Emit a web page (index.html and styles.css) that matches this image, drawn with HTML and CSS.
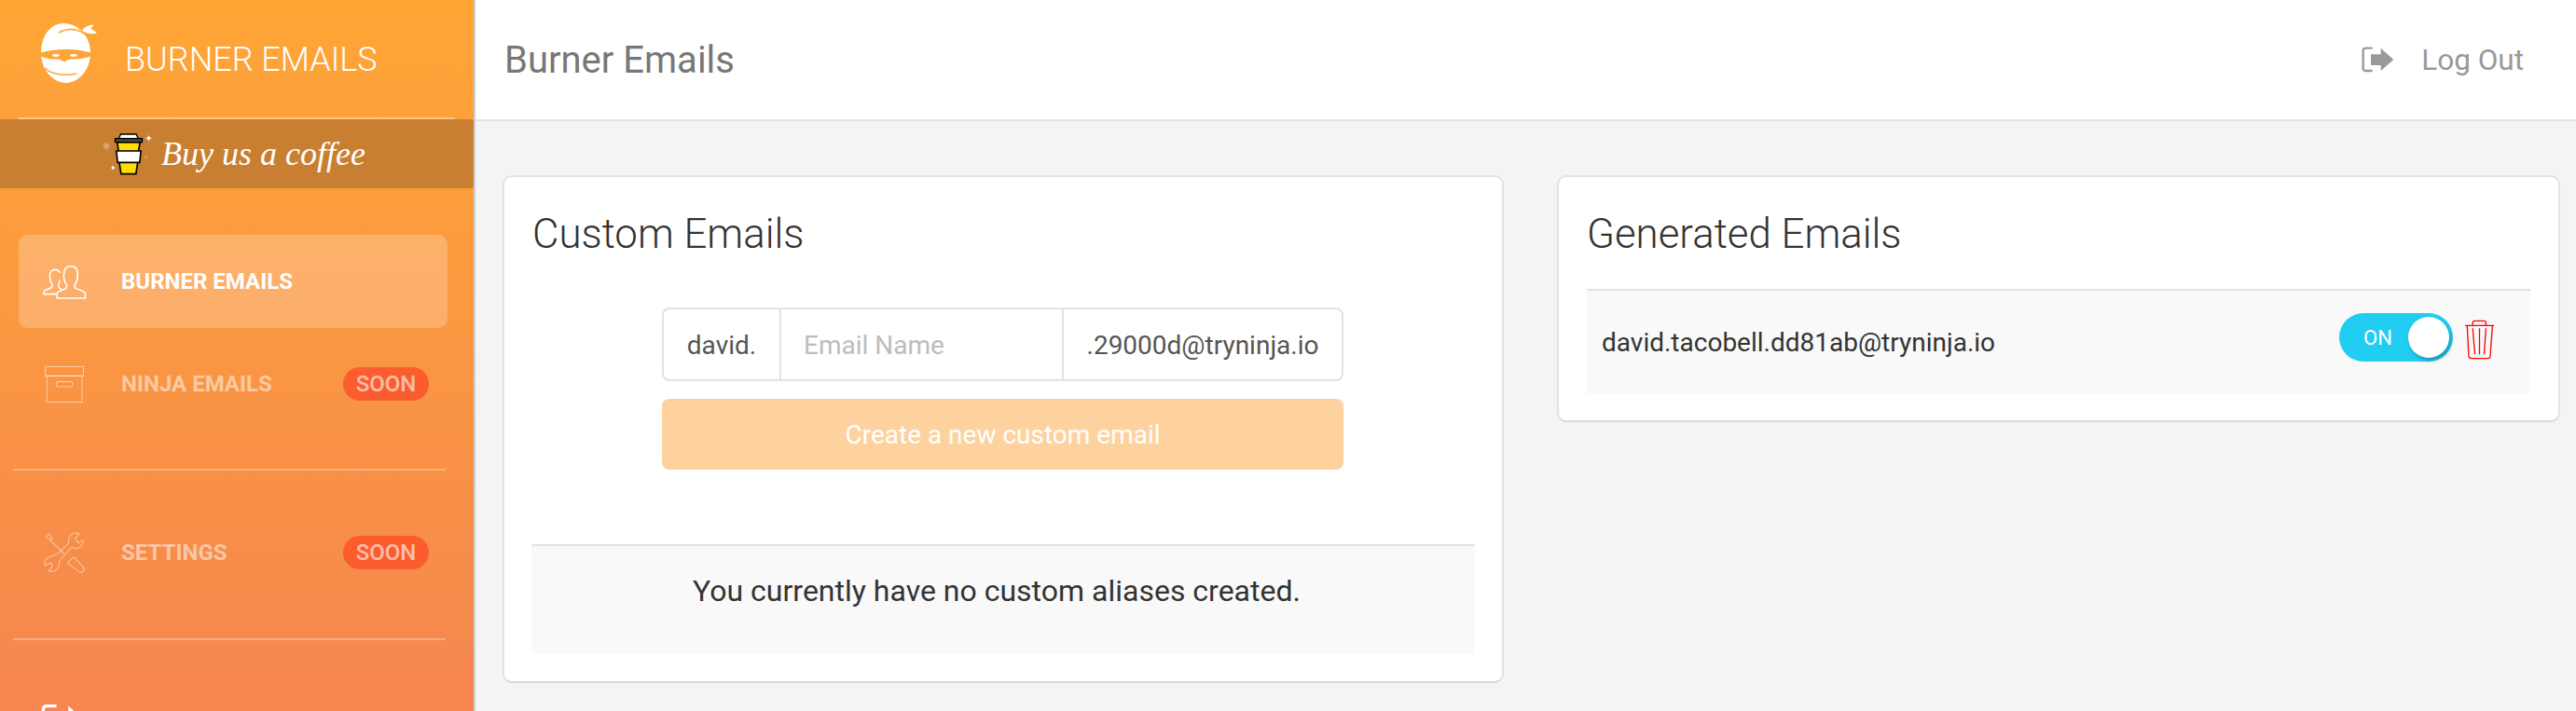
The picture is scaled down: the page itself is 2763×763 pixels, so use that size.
FILE: index.html
```html
<!DOCTYPE html>
<html lang="en">
<head>
<meta charset="utf-8">
<title>Burner Emails</title>
<link rel="stylesheet" href="styles.css">
</head>
<body>
<div class="app">
  <aside class="sidebar">
    <div class="brand">
      <svg class="logo" viewBox="44 22 62 68" aria-hidden="true">
        <path fill="#fff" d="M68 24C84 24 97 38 97 56C97 74 84 88 71 88C57 88 44 74 44 56C44 38 54 24 68 24Z"/>
        <path fill="#fff" d="M88 32C91 27 97 25 101 26L97 29.500C100 31 102 33 104 34.500C99 36 92 35 88 32Z"/>
        <path fill="none" stroke="#ffa537" stroke-width="1.600" d="M63 34C72 29 84 29 93 37"/>
        <path fill="#ffa537" d="M44 55.500C53 52.500 62 52 70 52C80 52 90 53 97 55.500L97 59.500C90 62 84 62.500 77 62.500C73 62.500 71 64 69 65.500C67 64 65 62.500 61 62.500C55 62.500 49 62 44 59.500Z"/>
        <ellipse fill="#fff" cx="60" cy="58.500" rx="3.800" ry="1.400"/>
        <ellipse fill="#fff" cx="79" cy="58.500" rx="3.800" ry="1.400"/>
        <path fill="none" stroke="#ffa537" stroke-width="1.500" d="M48 72C56 79 70 81 82 78"/>
      </svg>
      <span class="brand-name">BURNER EMAILS</span>
    </div>
    <div class="rule rule-top"></div>
    <a class="coffee">
      <svg class="cup" viewBox="50 40 170 150" aria-hidden="true">
        <circle cx="68" cy="90" r="11" fill="#fff" opacity=".22"/>
        <circle cx="68" cy="90" r="4" fill="#fff" opacity=".25"/>
        <circle cx="195" cy="127" r="5" fill="#fff" opacity=".25"/>
        <circle cx="89" cy="160" r="5" fill="#fff"/>
        <path fill="#fff" d="M204 55L207 62L214 65L207 68L204 75L201 68L194 65L201 62Z"/>
        <path fill="#fff" stroke="#000" stroke-width="4" d="M108 66L114 52H164L170 66Z"/>
        <path fill="#ffdd00" stroke="#000" stroke-width="5" d="M103 78H176L171 108H107Z"/>
        <path fill="#ffdd00" stroke="#000" stroke-width="5" d="M109 140H169L163 180H115Z"/>
        <path fill="#fff" stroke="#000" stroke-width="5" d="M100 106H179L175 143H104Z"/>
        <path fill="#444" stroke="#000" stroke-width="4" d="M96 66H183V78H96Z"/>
      </svg>
      <span class="coffee-text">Buy us a coffee</span>
    </a>
    <nav class="nav">
      <a class="nav-item is-active">
        <svg class="nav-icon" viewBox="70 60 160 125" aria-hidden="true">
          <path d="M125 180V165Q125 158 135 155L155 147Q160 143 158 135Q148 120 148 100Q148 70 172 70Q196 70 196 100Q196 120 186 135Q184 143 190 147L212 155Q222 158 222 165V180Z"/>
          <path d="M122 166H80V158Q80 153 88 151L104 145Q110 141 108 133Q100 120 100 105Q100 82 118 82Q131 82 135 93M135 118Q133 128 130 134Q129 142 134 146L141 150"/>
        </svg>
        <span class="nav-label">BURNER EMAILS</span>
      </a>
      <a class="nav-item is-muted">
        <svg class="nav-icon" viewBox="70 385 160 135" aria-hidden="true">
          <rect x="85" y="393" width="131" height="32"/>
          <rect x="90" y="425" width="121" height="90"/>
          <rect x="122" y="445" width="57" height="17" rx="8"/>
        </svg>
        <span class="nav-label">NINJA EMAILS</span>
        <span class="badge">SOON</span>
      </a>
      <div class="rule rule-a"></div>
      <a class="nav-item is-muted">
        <svg class="nav-icon" viewBox="70 50 160 160" aria-hidden="true">
          <path d="M205 60A28 28 0 0 0 167 94L128 133C112 140 104 140 96 145A28 28 0 0 0 78 180L82 176L100 168L106 180L92 198A28 28 0 0 0 130 164L177 110A28 28 0 0 0 220 84L200 93L190 78Z"/>
          <path d="M82 70L92 60L105 74L97 84ZM98 84L150 136M162 168L186 146L222 185Q226 195 218 202Q210 207 202 200Z"/>
        </svg>
        <span class="nav-label">SETTINGS</span>
        <span class="badge">SOON</span>
      </a>
      <div class="rule rule-b"></div>
      <a class="nav-item nav-logout">
        <svg class="exit-icon" viewBox="155 85 108 84" aria-hidden="true">
          <path class="exit-frame" d="M190 90H168Q160 90 160 98V155Q160 163 168 163H190"/>
          <path class="exit-arrow" d="M185 110H217V90L258 127L217 163V145H185Z"/>
        </svg>
      </a>
    </nav>
  </aside>
  <div class="content">
    <header class="topbar">
      <h1 class="page-title">Burner Emails</h1>
      <a class="logout">
        <svg class="logout-icon" viewBox="155 85 108 84" aria-hidden="true">
          <path class="logout-frame" d="M190 90H168Q160 90 160 98V155Q160 163 168 163H190"/>
          <path class="logout-arrow" d="M185 110H217V90L258 127L217 163V145H185Z"/>
        </svg>
        <span>Log Out</span>
      </a>
    </header>
    <main class="cards">
      <section class="card card-custom">
        <h2 class="card-title">Custom Emails</h2>
        <form class="create-form">
          <div class="input-group">
            <span class="addon addon-left">david.</span>
            <span class="input-name">Email Name</span>
            <span class="addon addon-right">.29000d@tryninja.io</span>
          </div>
          <button class="create-btn" type="button">Create a new custom email</button>
        </form>
        <div class="empty">You currently have no custom aliases created.</div>
      </section>
      <section class="card card-generated">
        <h2 class="card-title">Generated Emails</h2>
        <div class="alias-row">
          <span class="alias">david.tacobell.dd81ab@tryninja.io</span>
          <span class="toggle"><span class="toggle-text">ON</span><span class="knob"></span></span>
          <svg class="trash" viewBox="727 127 100 130" aria-hidden="true">
            <path d="M730 146H825M755 146V138Q755 131 762 131H791Q798 131 798 138V146M737 147L742 245Q743 253 750 253H805Q811 253 812 245L819 147M755 155L762 240M777 155V240M798 155L792 240"/>
          </svg>
        </div>
      </section>
    </main>
  </div>
</div>
</body>
</html>
```

FILE: styles.css
```css
* { box-sizing: border-box; }
html, body { margin: 0; height: 100%; overflow: hidden; }
body { font-family: Roboto, "Liberation Sans", sans-serif; background: #f4f4f4; color: #333; }
.app { display: flex; height: 763px; overflow: hidden; }

.sidebar {
  flex: 0 0 510px;
  width: 510px;
  height: 763px;
  overflow: hidden;
  background: linear-gradient(180deg, #ffa636 0%, #f5864f 100%);
  border-right: 2px solid #cfcfcf;
}
.brand { display: flex; align-items: center; height: 126px; padding-left: 44px; gap: 28px; }
.logo { width: 62px; height: 68px; flex: none; margin-top: -12px; }
.brand-name { font-size: 36px; font-weight: 300; color: #fff; margin-top: 2px; }
.rule { height: 2px; background: rgba(255, 255, 255, .3); }
.rule-top { margin: 0 20px; background: rgba(255, 255, 255, .4); }
.rule-a { margin: 41px 2px 38px -6px; }
.rule-b { margin: 42px 2px 38px -6px; }
.coffee {
  display: flex;
  align-items: center;
  justify-content: center;
  gap: 8px;
  width: 510px;
  height: 74px;
  padding-right: 10px;
  background: #c87f32;
  border-radius: 0 6px 6px 0;
}
.cup { width: 57px; height: 50px; flex: none; }
.coffee-text { font-family: "Liberation Serif", serif; font-style: italic; font-size: 36px; color: #fff; }
.nav { margin: 50px 0 0 20px; width: 460px; }
.nav-item { display: flex; align-items: center; height: 100px; padding: 0 20px 0 24px; margin-bottom: 10px; border-radius: 10px; color: #fff; }
.nav-item:nth-of-type(2) { margin-bottom: 0; }
.is-active { background: rgba(255, 255, 255, .22); }
.is-muted { color: rgba(255, 255, 255, .5); }
.nav-icon { width: 50px; height: 40px; flex: none; margin-right: 36px; fill: none; stroke: currentColor; stroke-width: 5; }
.nav-item.is-muted .nav-icon { height: 46px; stroke-width: 3.500; }
.nav-label { font-size: 24px; font-weight: 700; flex: 1; }
.badge { background: #fc5d2e; color: rgba(255, 255, 255, .6); font-size: 24px; font-weight: 500; width: 92px; height: 36px; line-height: 36px; text-align: center; border-radius: 18px; }
.exit-icon { width: 51px; height: 40px; flex: none; }
.exit-frame { fill: none; stroke: #fff; stroke-width: 7; }
.exit-arrow { fill: #fff; }

.content { flex: 1; min-width: 0; display: flex; flex-direction: column; }
.topbar { flex: none; display: flex; align-items: center; justify-content: space-between; height: 130px; background: #fff; border-bottom: 2px solid #e4e4e4; padding: 0 56px 0 31px; }
.page-title { margin: 0; font-size: 40px; font-weight: 400; color: #777; }
.logout { display: flex; align-items: center; gap: 28px; font-size: 31.500px; color: #999; }
.logout-icon { width: 36px; height: 28px; flex: none; }
.logout-frame { fill: none; stroke: #999; stroke-width: 7; }
.logout-arrow { fill: #999; }

.cards { display: grid; grid-template-columns: 1074px 1076px; column-gap: 57px; align-items: start; padding: 58px 0 0 29px; }
.card { background: #fff; border: 2px solid #e2e2e2; border-bottom-color: #d8d8d8; border-radius: 10px; padding: 0 30px 30px; }
.card-custom { height: 545px; padding: 0 29px 30px; }
.card-custom .card-title { padding-left: 1px; }
.card-generated { height: 265px; }
.card-title { margin: 0; font-size: 43.800px; font-weight: 300; line-height: 50px; padding-top: 36px; color: #333; }
.create-form { width: 731px; margin: 54px 0 0 140px; }
.input-group { display: flex; height: 79px; border: 2px solid #e2e2e2; border-radius: 8px; font-size: 28px; line-height: 77px; color: #555; }
.addon { display: block; white-space: nowrap; text-align: center; }
.addon-left { width: 124px; }
.input-name { width: 305px; padding-left: 24px; border-left: 2px solid #e2e2e2; border-right: 2px solid #e2e2e2; color: #bdbdbd; }
.addon-right { flex: 1; }
.create-btn { display: block; width: 100%; height: 76px; margin-top: 19px; border: 0; border-radius: 8px; background: #fed29e; color: #fff; font: 400 28px Roboto, sans-serif; }
.empty { height: 118px; margin-top: 80px; padding-right: 14px; background: #f9f9f9; border-top: 2px solid #e2e2e2; text-align: center; font-size: 32px; line-height: 96px; color: #333; }
.alias-row { display: flex; align-items: center; height: 112px; margin-top: 34px; padding: 0 38px 0 16px; background: #f9f9f9; border-top: 2px solid #e2e2e2; }
.alias { flex: 1; font-size: 28px; color: #333; }
.toggle { display: flex; align-items: center; justify-content: space-between; width: 122px; height: 52px; margin-top: -10px; padding: 0 4px 0 26px; border-radius: 26px; background: #22cdf2; color: #fff; font-size: 22px; }
.knob { width: 44px; height: 44px; border-radius: 50%; background: #fff; box-shadow: 2px 3px 4px rgba(0, 0, 0, .25); }
.trash { width: 33px; height: 43px; margin: -6px 0 0 12px; flex: none; fill: none; stroke: #f00; stroke-width: 4; }
```
